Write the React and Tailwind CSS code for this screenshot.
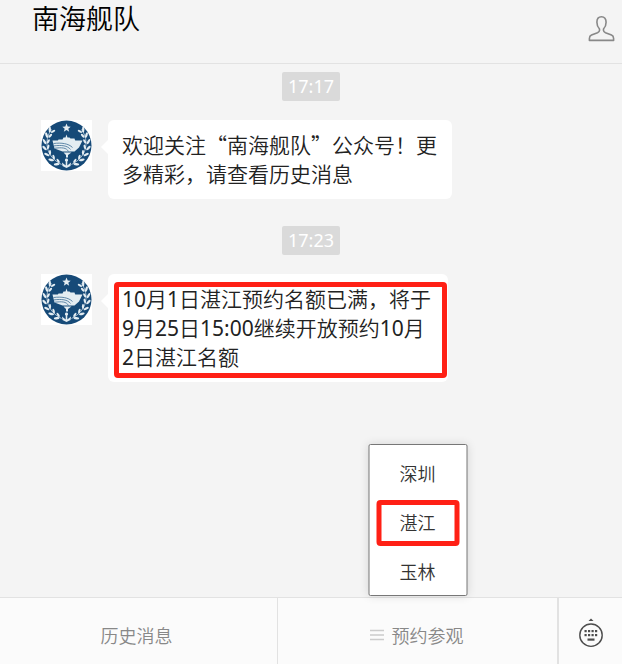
import React, { useState } from 'react';
import clsx from 'clsx';

const MESSAGES = [
  { id: 1, time: '17:17', text: '欢迎关注“南海舰队”公众号！更多精彩，请查看历史消息' },
  {
    id: 2,
    time: '17:23',
    text: '10月1日湛江预约名额已满，将于9月25日15:00继续开放预约10月2日湛江名额',
    marked: true,
  },
];

const CITIES = [
  { name: '深圳' },
  { name: '湛江', marked: true },
  { name: '玉林' },
];

// leaf positions for the right branch of the wreath, the left one is mirrored
const LEAVES = [
  { x: 15, y: -15, r: -30 },
  { x: 18, y: -10, r: -12 },
  { x: 20, y: -4, r: 2 },
  { x: 20, y: 2, r: 16 },
  { x: 18, y: 8, r: 32 },
  { x: 14, y: 13, r: 48 },
  { x: 9, y: 17, r: 66 },
];

function Branch() {
  return (
    <g>
      <path d="M15 -16 C23 -5 21 11 5 19" fill="none" stroke="#c9d8e4" strokeWidth="0.8" />
      {LEAVES.map((l) => (
        <g key={l.y} transform={`translate(${l.x} ${l.y}) rotate(${l.r})`}>
          <ellipse cx="-1.5" cy="-1" rx="1.1" ry="2.4" transform="rotate(-32)" />
          <ellipse cx="1.7" cy="-1" rx="1.2" ry="2.9" transform="rotate(30)" />
        </g>
      ))}
    </g>
  );
}

function Avatar() {
  return (
    <svg viewBox="-25.5 -25.5 51 51" className="size-[51px] shrink-0 bg-white" role="img" aria-label="南海舰队">
      <circle r="25" fill="#164a78" />
      <g fill="#e4edf2">
        <Branch />
        <g transform="scale(-1 1)">
          <Branch />
        </g>
        <path d="M0 -22 L1.2 -19 L4.2 -18.8 L1.8 -16.8 L2.7 -13.8 L0 -15.5 L-2.7 -13.8 L-1.8 -16.8 L-4.2 -18.8 L-1.2 -19 Z" />
        <path d="M-9 -4 L-8 -6 H-4 L-3 -8 H-1 L0 -11 L1 -8 H3 L4 -7 H8 L9 -4 Z" />
        <path d="M-14 -5 L16 -5 L12.5 2 L8 6 L-4 6 L-12 3 Z" />
        <path d="M-3 7 H5 L1.5 9.5 V12 H-0.5 V9.5 Z" />
        <path d="M0 13 A1.6 1.6 0 0 1 0.8 16 V20 L4.5 17 L4 20.5 L0 22.5 L-4 20.5 L-4.5 17 L-0.8 20 V16 A1.6 1.6 0 0 1 0 13 Z" />
      </g>
      <path
        d="M-13 -2 C-5 -3 2 -2 6 2 M-12.5 0.4 C-5 -0.6 1 0 4 4 M-12 2.8 C-5 1.8 0 2 2 6"
        fill="none"
        stroke="#3f6f95"
        strokeWidth="0.8"
      />
    </svg>
  );
}

function PersonIcon() {
  return (
    <svg viewBox="0 0 27 27" className="size-[27px]" fill="none" stroke="#888888" strokeWidth="1.6" strokeLinejoin="round" aria-hidden="true">
      <path d="M13.5 1.8 C10.5 1.8 8.9 4 8.9 7.2 C8.9 10.2 9.8 12.3 11.5 14 V15.6 C11.5 16.6 10.8 17.1 9.5 17.7 L3.5 20.1 C1.8 20.8 1.4 21.8 1.4 23.5 V25.4 H25.6 V23.5 C25.6 21.8 25.2 20.8 23.5 20.1 L17.5 17.7 C16.2 17.1 15.5 16.6 15.5 15.6 V14 C17.2 12.3 18.1 10.2 18.1 7.2 C18.1 4 16.5 1.8 13.5 1.8 Z" />
    </svg>
  );
}

function KeyboardIcon() {
  return (
    <svg viewBox="0 0 26 30" className="h-[30px] w-[26px]" fill="#4d4d4d" aria-hidden="true">
      <path d="M10.5 3 L13 0.6 L15.5 3 Z" />
      <circle cx="13" cy="17.2" r="11.2" fill="none" stroke="#4d4d4d" strokeWidth="1.4" />
      {[12, 16].map((y) =>
        [6.5, 10, 13.5, 17].map((x) => <rect key={`${x}-${y}`} x={x} y={y} width="2.2" height="2.2" />)
      )}
      <rect x="9.5" y="20.5" width="7" height="2.2" />
    </svg>
  );
}

// numbers get the latin face, everything else stays in the CJK one
function MessageText({ text }) {
  return (
    <p>
      {text.split(/([\d:]+)/).map((part, i) =>
        /^\d/.test(part) ? (
          <span key={i} className="font-['Noto_Sans',sans-serif] leading-none font-normal">
            {part}
          </span>
        ) : (
          part
        )
      )}
    </p>
  );
}

function Message({ message }) {
  return (
    <li className="flex flex-col">
      <time className="self-center rounded-xs bg-[#dadada] px-[6px] font-['Noto_Sans',sans-serif] text-[18px] leading-[29px] font-normal text-white">
        {message.time}
      </time>
      <div className="mt-[19px] flex items-start gap-4 pr-[170px] pl-[41px]">
        <Avatar />
        <div
          className={clsx(
            'relative rounded-md bg-white px-[14px] pt-[10px] pb-[11px] text-[21px] leading-[29px] text-[#222222]',
            message.marked && 'mr-1'
          )}
        >
          <span className="absolute top-[19px] -left-[7px] border-y-8 border-r-8 border-y-transparent border-r-white" />
          <MessageText text={message.text} />
          {message.marked && (
            <span className="pointer-events-none absolute top-2 right-px bottom-1 left-[6px] rounded-sm border-[5px] border-[#ff2015]" />
          )}
        </div>
      </div>
    </li>
  );
}

export default function App() {
  const [open, setOpen] = useState(true);

  return (
    <div lang="zh-CN" className="flex min-h-screen flex-col bg-[#f4f4f4] font-['Noto_Sans_CJK_SC',sans-serif] font-[350]">
      <header className="flex h-16 items-start justify-between border-b border-[#e2e2e2] pr-[7px] pl-8">
        <h1 className="text-[27px] leading-9 font-[350] text-black">南海舰队</h1>
        <button type="button" aria-label="公众号资料" className="mt-[15px]">
          <PersonIcon />
        </button>
      </header>

      <main className="flex-1 pt-2">
        <ul className="flex flex-col gap-[27px]">
          {MESSAGES.map((m) => (
            <Message key={m.id} message={m} />
          ))}
        </ul>
      </main>

      <footer className="grid h-[67px] grid-cols-[278fr_281fr_63px] border-t border-[#e2e2e2] bg-[#fbfbfb] text-[18px] text-[#888888]">
        <button type="button" className="border-r border-[#e2e2e2] pt-2 pr-1">
          历史消息
        </button>
        <div className="relative flex border-r-2 border-[#e2e2e2]">
          <button
            type="button"
            aria-expanded={open}
            onClick={() => setOpen(!open)}
            className="flex flex-1 items-center justify-center gap-2 pt-2 pr-[2px]"
          >
            <svg viewBox="0 0 14 12" className="h-3 w-[14px]" stroke="#cccccc" strokeWidth="1.5" aria-hidden="true">
              <path d="M0 1.5 H14 M0 6 H14 M0 10.5 H14" />
            </svg>
            预约参观
          </button>
          {open && (
            <ul className="absolute bottom-[68px] left-1/2 flex w-[99px] -translate-x-1/2 flex-col gap-[3px] rounded-xs border border-[#777777] bg-white px-[7px] pt-[6px] text-[#333333] shadow-[0_0_10px_rgba(0,0,0,0.12)]">
              {CITIES.map((city) => (
                <li key={city.name} className="flex">
                  <button
                    type="button"
                    className={clsx(
                      'h-[46px] w-full rounded-sm border-[5px] pb-px',
                      city.marked ? 'border-[#ff2015]' : 'border-transparent'
                    )}
                  >
                    {city.name}
                  </button>
                </li>
              ))}
            </ul>
          )}
        </div>
        <button type="button" aria-label="切换键盘" className="flex items-center justify-center pt-1">
          <KeyboardIcon />
        </button>
      </footer>
    </div>
  );
}
